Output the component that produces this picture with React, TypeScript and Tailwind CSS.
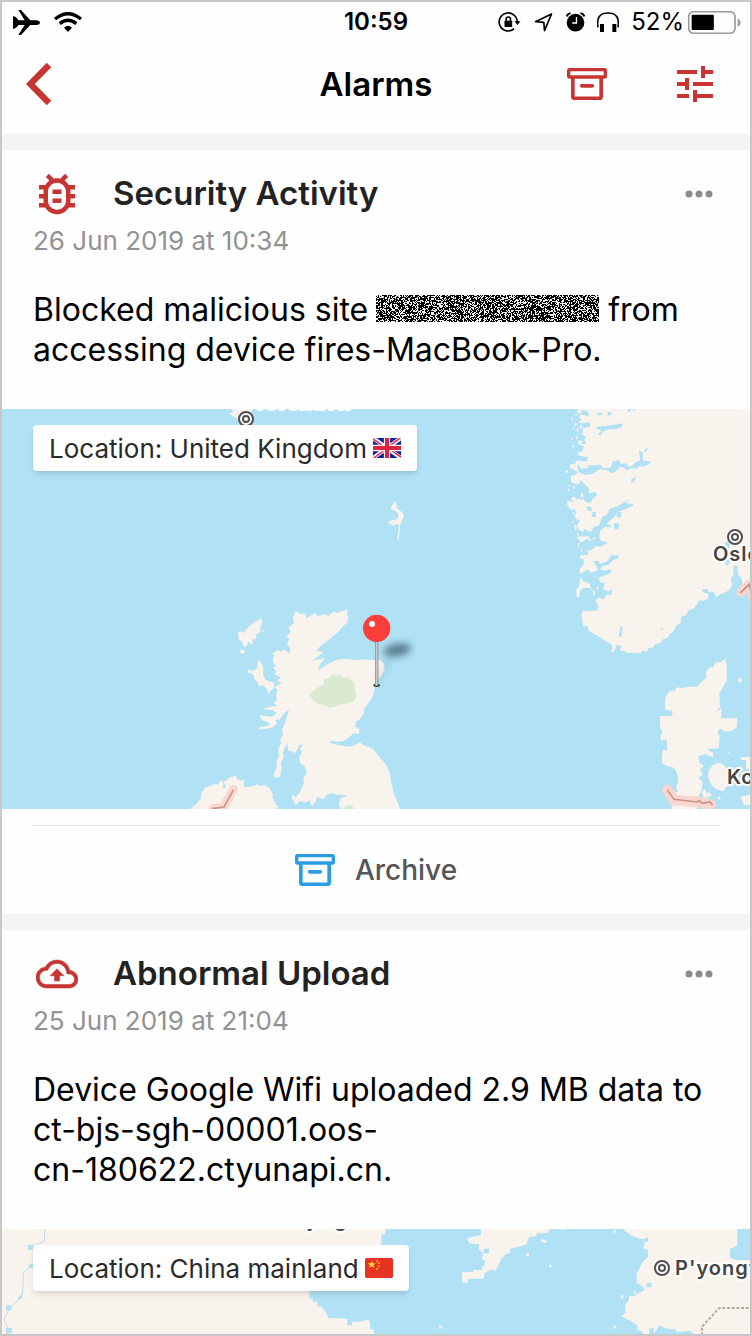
import React from "react";
import type { ReactNode } from "react";

function ArchiveIcon({ className }: { className: string }) {
  return (
    <svg viewBox="0 0 120 96" className={className} fill="none" stroke="currentColor" aria-hidden="true">
      <rect x="5" y="5" width="110" height="22" rx="3" strokeWidth="10" />
      <path d="M17.500 28V86q0 5 5 5h75q5 0 5-5V28" strokeWidth="11" />
      <path d="M44 53.500h32" strokeWidth="11" strokeLinecap="round" />
    </svg>
  );
}

function BugIcon() {
  return (
    <svg viewBox="0 0 24 24" className="size-[54px]" fill="currentColor" aria-hidden="true">
      <path d="M20 8h-2.810c-.45-.78-1.070-1.450-1.820-1.960L17 4.410 15.590 3l-2.170 2.170C12.960 5.060 12.490 5 12 5s-.96.06-1.410.17L8.410 3 7 4.410l1.620 1.630C7.880 6.550 7.260 7.220 6.810 8H4v2h2.090c-.05.33-.09.66-.09 1v1H4v2h2v1c0 .34.04.67.09 1H4v2h2.810c1.040 1.790 2.970 3 5.190 3s4.150-1.210 5.190-3H20v-2h-2.090c.05-.33.09-.66.09-1v-1h2v-2h-2v-1c0-.34-.04-.67-.09-1H20V8zm-4 4v3c0 2.210-1.790 4-4 4s-4-1.790-4-4v-4c0-2.210 1.790-4 4-4s4 1.790 4 4v1zm-6 2h4v2h-4v-2zm0-4h4v2h-4v-2z" />
    </svg>
  );
}

function CloudIcon() {
  return (
    <svg viewBox="0 0 24 24" className="size-[42px]" fill="currentColor" stroke="currentColor" strokeWidth=".3" aria-hidden="true">
      <path d="M19.350 10.040C18.670 6.590 15.640 4 12 4 9.110 4 6.600 5.640 5.350 8.040 2.340 8.360 0 10.910 0 14c0 3.310 2.690 6 6 6h13c2.760 0 5-2.240 5-5 0-2.640-2.050-4.780-4.650-4.960zM19 18H6c-2.210 0-4-1.790-4-4 0-2.050 1.530-3.760 3.560-3.970l1.070-.11.5-.95A5.469 5.469 0 0 1 12 6c2.620 0 4.880 1.860 5.390 4.430l.3 1.500 1.530.11A2.980 2.980 0 0 1 22 15c0 1.650-1.350 3-3 3zM8 13h2.550v3h2.900v-3H16l-4-4z" />
    </svg>
  );
}

function UkFlag() {
  return (
    <svg viewBox="0 0 84 60" className="h-5 w-7" aria-hidden="true">
      <clipPath id="uk-flag">
        <rect width="84" height="60" rx="5" />
      </clipPath>
      <g clipPath="url(#uk-flag)">
        <rect width="84" height="60" fill="#0a1f9c" />
        <path d="M0 0L84 60M84 0L0 60" stroke="#f4f4f8" strokeWidth="12" />
        <path d="M-2 1L40 31M86 59L44 29M84 -2L44 28M0 62L40 32" stroke="#dc2440" strokeWidth="4" />
        <path d="M42 0V60M0 30H84" stroke="#f4f4f8" strokeWidth="19" />
        <path d="M42 0V60M0 30H84" stroke="#dc2440" strokeWidth="12" />
      </g>
    </svg>
  );
}

function ChinaFlag() {
  return (
    <svg viewBox="0 0 84 60" className="h-5 w-7" aria-hidden="true">
      <rect width="84" height="60" rx="5" fill="#e63323" />
      <path d="M20 8l3 8 9 0-7 6 3 8-8-5-8 5 3-8-7-6 9 0z" fill="#fbdc3a" />
      <path d="M36 6l3 3-4 2zM41 13l3 3-4 2zM41 23l3 3-4 2zM35 30l4 3-4 2z" fill="#fbdc3a" stroke="#fbdc3a" />
    </svg>
  );
}

function buildNoise(width: number, height: number): string {
  let seed = 20190626;
  let d = "";
  for (let y = 0; y < height; y++) {
    for (let x = 0; x < width; x++) {
      seed = (Math.imul(seed, 1664525) + 1013904223) >>> 0;
      if (seed >>> 16 < 25000) d += `M${x} ${y}h1v1h-1z`;
    }
  }
  return d;
}

const NOISE = buildNoise(223, 27);

function Redacted() {
  return (
    <svg
      viewBox="0 0 223 27"
      className="ml-2 inline-block h-[27px] w-[223px] bg-black align-[-1px]"
      shapeRendering="crispEdges"
      aria-hidden="true"
    >
      <path d={NOISE} fill="#f0f0f0" />
    </svg>
  );
}

function CityMarker({ x, y }: { x: number; y: number }) {
  return (
    <g fill="none" stroke="#505050">
      <circle cx={x} cy={y} r="7" fill="#fff" strokeWidth="2" />
      <circle cx={x} cy={y} r="3" strokeWidth="2" />
    </g>
  );
}

function CityName({ x, y, children }: { x: number; y: number; children: string }) {
  return (
    <text
      x={x}
      y={y}
      fill="#444"
      stroke="#fff"
      strokeWidth="4"
      strokeLinejoin="round"
      paintOrder="stroke"
      className="font-[Inter,sans-serif] text-[20px] font-semibold tracking-wider"
    >
      {children}
    </text>
  );
}

function NorthSeaMap() {
  return (
    <svg
      viewBox="2 409 748 400"
      preserveAspectRatio="xMidYMin slice"
      className="block h-[400px] w-full bg-[#b0e1f5]"
      role="img"
      aria-label="Map"
    >
      <defs>
        <linearGradient id="needle" x1="0" x2="1" y1="0" y2="0">
          <stop offset="0" stopColor="#888" />
          <stop offset=".5" stopColor="#d4d4d4" />
          <stop offset="1" stopColor="#808080" />
        </linearGradient>
        <filter id="soft" x="-50%" y="-50%" width="200%" height="200%">
          <feGaussianBlur stdDeviation="11" />
        </filter>
      </defs>

      <g transform="translate(0 400) scale(.33333)" fill="#f8f3ec">
        <path d="M695 27h65l-8 10-20 2-6 12-14 6-14-8-10-10 12-2z" />
        <path d="M1186 302l4 14 3 10 10 8 9 12-5 14-6 14-2 18-2 26-5 2 2-22 3-24-10-2-6 6-14-8-4-4 14-6 14-2 4-10-2-10-8-6-12-6 0-6z" />
      </g>

      <g transform="translate(550 400) scale(.33333)">
        <path
          fill="#f8f3ec"
          d="M83 27v12l10 2-6 12 9 6-12 6 14 8-12 8 14 6-4 16 12 8-8 12-14-2-2 10 18 8-4 14-18 6 10 10 24 2-4 14-28-4-8 10-12 2-4 10 16 8 10 6-8 8-14 2 2 20 14 6 24-2-2 12 10 12-14 10 6 14-18-2-12 8-20-2 0 14 14 14 8-4 4 12-4 16 16 6-8 14 4 14 14 8-6 12-12 2 8 14 14 4-2 12-10 4 4 16-8 12 14 6-2 16-10 10-2 14 8 6-6 16-4 20-8 8 2 22h8l2-18 10-8 18-2 12 10-2 12 16 6-8 12 10 14-4 14-22 2-22 0-4 10 6 36h14l2 14 18 10 18 10 14 10 12 6 10 8-4 18 8 2 8-22 14 2-4 14 10 2 14 6h38l8-8 10 4 6-10 14-4 6-10 16-2 8-12 14-4 4-10 12-8 8-16 14-10 2-18 14-6 8-14 16-6 10-14 6-10 14 2 12-8 2-14-18-4-2-10 16 0 6 10 12-2 8 16 10-6 20-10 12-6 6-16-4-18 8-6v-30l12-2 2 28 10 8 4 20 12 8 2 12 12 2 4 18 16 10 2 16 10 18V27z"
        />
        <g fill="#b0e1f5">
          <path d="M83 190l10 16 20-2 4-8 34-2 8 10 22 0 8-20 18-4 6 12 16-2 6 10 12-2 10-12 14-4-4-30 14 6 4-10 8-4-4 10-12 4 2 24 24 2-6 8-16 8-14-2-6 8-18-2-12 8-10-10-12-2-8 10-12 10-20-10-20-2-22 14-24 2-18-8z" />
          <path d="M94 30l14 2 10 10-4 6-20-4zM140 38h16v8h-12zM172 36h12v10h-12zM232 24l4 14 10-12 10 12-4-14zM96 68h24v12l-24 4zM140 80l26-2 28-4 24-4-2 10-18 8-24 0-14 6-8 12-8-2 10-12-16-6zM96 122h12v10H96zM244 236l14-4-6 14-8 4z" />
          <path d="M90 240l16 14 12 12-2 14 20-4 6 10-12 8-10 16-16-6-8-24-12-6zM110 318l14 4 2 12-14-2zM128 335h10v16h-14z" />
          <path d="M250 312l-26-2 16-14-18 10-18 12-26 10-8 16-14 6-8 26-16 4-10 16-20-10-6 24 18-2 8 12 12-8 14 4 2-24 16-12 8-14 18-14 10-16 24-8 24-12z" />
          <path d="M200 336h14v16h-14zM168 374h14v8h-14zM192 370h14v18h-14zM94 430l16-14 10 6 24-10 10 10 20 6-24 12-14-2-8 10-26 8-8-10zM96 452l20 4-4 10-16 0z" />
          <path d="M92 522l20-14 12 10 20-8-8-18-8-8 18-2 4 10 22-8 12-18 22 0-2 8-14 6-14 14-22 6 6 12 20-4 6 8-18 10-22 6 4 14 14 4-6 18 20 6 10-8-4 18-16 0-6 14-14-4-16-2 4-16-14-12-4-14-20-6z" />
          <path d="M206 708l6-30 6 4-4 30zM328 694l10-14-2 18z" />
        </g>
        <path
          d="M65 54h4v6h-4zM76 42h5v6h-5zM68 84h5v4h-5zM74 70h6v8h-6zM65 114h4v6h-4zM66 136h5v6h-5zM44 214l10-4 0 6-8 4zM56 256h6v4h-6zM70 258h4v8h-4zM54 266h4v6h-4zM65 292h14v10H65zM68 337h5v6h-5zM75 343h5v6h-5zM66 364h5v4h-5zM74 374h6v16h-6zM82 400h4v18h-4zM84 428h4v12h-4zM80 84h5v10h-5zM78 110h5v8h-5zM92 280h8v12h-8zM98 310h8v6h-8zM152 504h6v5h-6zM140 560h5v8h-5z"
          fill="#f8f3ec"
        />
        <path d="M525 430l8-8 8 14-6 14-8-4zM522 482l14-6 4 14-10 8z" fill="#b0e1f5" />
        <path d="M573 577l24-24 12 42" fill="none" stroke="#f9d6cf" strokeWidth="28" strokeLinejoin="round" strokeLinecap="round" />
        <path d="M571 579l26-26 12 42" fill="none" stroke="#c98982" strokeWidth="5" />
      </g>

      <g transform="translate(190 590) scale(.33333)" fill="#f8f3ec">
        <path d="M317 62L330 72 345 70 350 85 365 75 375 68 385 78 405 72 415 78 430 65 442 68 460 62 475 58 470 72 475 82 472 98 460 108 445 125 430 138 415 150 400 162 388 172 378 182 402 186 394 192 366 212 384 208 405 205 390 222 385 240 400 230 420 218 440 210 460 206 480 208 500 210 520 208 550 210 570 210 582 222 584 240 575 255 562 275 555 290 552 305 545 325 535 340 522 358 522 370 510 388 498 396 495 410 508 418 506 432 490 430 478 442 462 452 445 455 425 453 418 458 440 464 465 468 480 470 495 464 510 456 520 466 535 470 550 478 560 490 568 502 580 514 590 528 598 545 602 565 605 585 610 605 618 625 632 660H452L446 640 452 625 475 616 440 614 425 610 408 615 402 628 382 622 375 638 365 648 358 630 345 638 330 632 318 645 305 625 308 612 318 622 330 605 335 595 342 580 340 565 350 550 345 530 330 518 328 500 335 488 330 475 340 465 330 463 322 478 315 492 305 482 294 482 292 460 285 470 278 490 282 500 272 520 275 535 270 560 255 563 250 558 260 530 260 510 268 495 264 480 274 455 270 450 280 430 275 420 285 400 290 380 298 358 282 370 270 388 255 390 262 400 248 412 225 418 205 418 210 410 232 408 240 400 215 390 208 375 225 378 245 380 262 370 250 362 218 356 240 350 262 348 250 338 262 330 258 318 262 300 255 290 275 280 262 272 272 262 252 252 260 245 248 232 258 228 248 215 252 195 248 190 264 180 275 185 280 178 300 190 300 175 290 160 298 148 288 140 302 125 295 112 312 100 308 85z" />
        <path d="M213 84l4 14-6 14 0 14-12 6-2 16-8 0-2 16-12-8-6 14-10 0-2-14-10-6-4-22 12-4 4 6 12-14 8-8 10-8 12-8zM148 184l10-6 8 6-6 8-8-2zM214 124l6-4 0 6z" />
        <path d="M207 210l8 10 6 16-2 16 6 16 12 6 16 4 0 16-12 8-6 10-4-14-10-12-14 2-6-12-8-10-4-14-14-4-2-8 18 2 12-10-2-12z" />
        <path d="M0 656l12-8 10-10 10-12 2-16 12-18 16-4 10-6 12 2 8-14 8 8-2 14 10 4-2-12-6-8 12-6 10-10 16-2 4 10 14 4 10-2-6 8 2 12 16 0 14-2 10-6 8 6 14-2 10 4 6 6 8 16 0 12 6 10 4 10 8 4-10 14v6z" />
        <path d="M356 316L372 302 385 290 400 284 402 268 415 266 428 252 440 258 448 252 455 262 478 264 486 274 495 282 494 298 500 318 492 334 470 340 450 344 422 354 402 346 380 340 366 326zM454 657l16-11h16l6 11z" fill="#d9ead0" />
        <path d="M68 656l34-6 28-52" fill="none" stroke="#f9d6cf" strokeWidth="26" strokeLinecap="round" strokeLinejoin="round" />
        <path d="M66 656l36-5 28-51" fill="none" stroke="#d0948e" strokeWidth="5" />
        <ellipse cx="622" cy="180" rx="42" ry="20" fill="#355061" opacity=".65" filter="url(#soft)" transform="rotate(-10 622 180)" />
        <path d="M562 285l40-84" stroke="#55707c" strokeWidth="7" opacity=".3" filter="url(#soft)" />
        <ellipse cx="560" cy="286" rx="10" ry="5" fill="#333" />
        <rect x="555" y="154" width="10" height="133" fill="url(#needle)" />
        <circle cx="560" cy="115" r="41" fill="#fb3e39" />
        <circle cx="546" cy="102" r="9" fill="#fff" />
      </g>

      <g transform="translate(630 630) scale(.33333)" fill="#f8f3ec">
        <path d="M0 0h106l-6 8-10-2-6 8-20 6-6 8-16-4-20 4-10-6-12-6z" />
        <path d="M296 76L285 90 290 100 290 150 278 175 268 190 270 232 260 245 275 235 273 265 322 265 320 292 305 303 285 305 270 295 262 308 270 320 266 355 230 356 250 370 248 382 225 372 205 378 208 398 222 408 210 418 218 432 205 445 218 455 214 485 205 500 200 540H122L128 525 118 515 125 490 145 485 138 470 145 455 140 425 128 412 110 408 95 398 98 360 112 360 110 328 92 332 92 315 98 310 90 290 90 258 127 258 127 242 106 240 104 215 110 195 120 182 135 182 138 172 160 175 170 170 200 170 215 155 230 140 228 125 240 112 250 112 255 98 275 95z" />
        <path d="M236 424l12-20 18-6 16 8 8 12 12 6 6 20-4 18-16 8-8 14-22-6-14-14-10-22zM332 382l34-2v40l-18-4 0-26-14 0zM332 500l34-6v30l-24 2zM324 150l8-8 6 12-10 4zM216 486l8-10 6 14 8-4 8 12-12 2-10 12zM260 504l10-6 2 14zM290 370l8-8 0 8z" />
        <path d="M112 480l20 30 76 6 34 8" fill="none" stroke="#f9d6cf" strokeWidth="32" strokeLinecap="round" strokeLinejoin="round" />
        <path d="M112 480l20 28 70 8 6-4 8 8 24-4 8 10" fill="none" stroke="#cf918b" strokeWidth="5" />
      </g>

      <CityMarker x={246} y={419} />
      <CityMarker x={735} y={537} />
      <CityName x={253} y={409}>Tórshavn</CityName>
      <CityName x={713} y={561}>Oslo</CityName>
      <CityName x={727} y={784}>Kobenhavn</CityName>
    </svg>
  );
}

function YellowSeaMap() {
  return (
    <svg
      viewBox="2 1229 748 400"
      preserveAspectRatio="xMidYMin slice"
      className="block h-[400px] w-full bg-[#b0e1f5]"
      role="img"
      aria-label="Map"
    >
      <g transform="translate(0 1210) scale(.33333)">
        <path fill="#f8f3ec" d="M0 57H1156V73H1144V133L1120 180 1000 215 928 240V266H938V276H952V290H964L976 304 986 324 1042 326V346H1056V336L1090 334 1104 328 1110 336V358H1122V1300H0z" />
        <g fill="#b0e1f5">
          <path d="M84 104h18v16H84zM86 164l14-4v14H86zM52 266l14-14v14zM18 286h16v14H18zM18 354h18v16H18z" />
        </g>
        <path d="M134 57v36l-34 14v56l-30 24-2 68-8 10-30 28-18 34 14 36-8 20" fill="none" stroke="#c3dce4" strokeWidth="3" />
      </g>
      <g transform="translate(400 1210) scale(.33333)">
        <g fill="#f8f3ec">
          <path d="M243 57V75L201 85 209 101 237 103V117L249 131 245 148 255 152V164L247 170V180H221L219 186H189L186 190V218H204V206H252V190L276 178 285 185 293 170 304 146 318 132 330 128V116L378 104 388 80 410 78V70H440L450 58V57z" />
          <path d="M668 57L692 75 720 87 734 87 744 80V95H734L730 115 744 120V140L728 156 710 190V218L726 228 734 240 706 254V258H688L686 272 676 282V308L664 318 690 332 712 346V362H726L730 374 748 374V355L762 355V372L778 346 800 356 826 358 832 366 870 362 884 376 900 1300H1100V150H1010L990 143V118L1012 106V57z" />
          <path d="M422 88l20 4-6 8-14-6zM378 130h9v8h-9zM447 164h8v8h-8zM663 256h8v8h-8zM117 347h8v8h-8zM641 347h8v8h-8zM640 60h8v8h-8zM698 236l12 14-6 2zM484 57h10v3h-10z" />
        </g>
        <path d="M251 116h16v14h-16zM740 218h15v14h-15z" fill="#b0e1f5" />
        <path d="M1060 294H958l-52 56v40" fill="none" stroke="#b7aba0" strokeWidth="6" strokeDasharray="9 5" />
      </g>
      <CityName x={275} y={1227}>Beijing</CityName>
      <CityMarker x={662} y={1268} />
      <CityName x={675} y={1275}>{"P'yongyang"}</CityName>
    </svg>
  );
}

function StatusBar() {
  return (
    <div className="grid h-10 grid-cols-[1fr_auto_1fr] items-center px-[9px]">
      <div className="flex items-center gap-[14px] pl-[2px]">
        <svg viewBox="0 0 81 75" className="h-[25px] w-[27px]" aria-hidden="true">
          <path d="M0 18l8 3 9 10 18 0-19-31h8l28 31h20q9 2 9 7t-9 7H52L24 75h-8l19-30H17L8 54l-8 3z" />
        </svg>
        <svg viewBox="0 0 84 60" className="h-5 w-7" fill="none" stroke="#000" strokeWidth="10" aria-hidden="true">
          <path d="M3 21Q42-11 81 21" />
          <path d="M17 35Q42 15 67 35" />
          <path d="M30 47Q42 36 54 47L42 60z" fill="#000" stroke="none" />
        </svg>
      </div>
      <span className="text-2xl font-semibold">10:59</span>
      <div className="flex items-center justify-end">
        <svg viewBox="0 0 68 60" className="h-5 w-[23px]" fill="none" stroke="#000" strokeWidth="5" aria-hidden="true">
          <path d="M57 30A27 27 0 1 0 48 50" />
          <path d="M49 28h18L58 39z" fill="#000" stroke="none" />
          <rect x="19" y="26" width="23" height="19" rx="2" fill="#000" stroke="none" />
          <path d="M24 28v-7q0-6 6.500-6t6.500 6v7" />
        </svg>
        <svg viewBox="0 0 56 60" className="ml-[13px] h-5 w-[19px]" fill="none" stroke="#000" strokeWidth="5" strokeLinejoin="round" aria-hidden="true">
          <path d="M52 6L4 29l25 2 2 25z" />
        </svg>
        <svg viewBox="0 0 58 60" className="ml-[13px] h-5 w-[19px]" aria-hidden="true">
          <circle cx="29" cy="32" r="27" />
          <path d="M2 13Q4 4 14 3M56 13Q54 4 44 3" fill="none" stroke="#000" strokeWidth="6" />
          <path d="M32 15v18H19" fill="none" stroke="#fff" strokeWidth="4" />
        </svg>
        <svg viewBox="0 0 66 60" className="ml-3 h-5 w-[22px]" fill="none" stroke="#000" strokeWidth="5" aria-hidden="true">
          <path d="M3 46Q-4 3 33 3T63 46" />
          <path d="M15 36v24M52 36v24" strokeWidth="12" />
        </svg>
        <span className="ml-3 text-2xl">52%</span>
        <svg viewBox="0 0 160 69" className="ml-1 h-[23px] w-[53px]" aria-hidden="true">
          <rect x="2" y="2" width="140" height="65" rx="15" fill="none" stroke="#9a9a9a" strokeWidth="5" />
          <rect x="11" y="11" width="67" height="46" rx="3" />
          <path d="M150 22q9 5 9 13t-9 13z" fill="#9a9a9a" />
        </svg>
      </div>
    </div>
  );
}

interface AlarmCardProps {
  icon: ReactNode;
  title: string;
  date: string;
  message: ReactNode;
  location: string;
  flag: ReactNode;
  map: ReactNode;
}

function AlarmCard({ icon, title, date, message, location, flag, map }: AlarmCardProps) {
  return (
    <article className="bg-[#fefefe]">
      <div className="px-[31px] pt-5 pb-[39px]">
        <div className="flex h-12 items-center">
          <span className="-ml-1 flex w-14 shrink-0 justify-center text-[#c63531]">{icon}</span>
          <h2 className="ml-7 flex-1 text-[33px] font-semibold text-[#222]">{title}</h2>
          <button type="button" aria-label="More options" className="mr-[6px] text-[#8c8c8c]">
            <svg viewBox="0 0 28 8" className="h-2 w-7" fill="currentColor" aria-hidden="true">
              <circle cx="4" cy="4" r="3.500" />
              <circle cx="14" cy="4" r="3.500" />
              <circle cx="24" cy="4" r="3.500" />
            </svg>
          </button>
        </div>
        <p className="text-[26px] leading-[46px] text-[#929292]">{date}</p>
        <p className="pt-[26px] text-[32px] leading-10 text-black">{message}</p>
      </div>
      <div className="relative">
        {map}
        <div className="absolute top-4 left-[31px] flex h-[46px] items-center gap-[6px] rounded bg-white px-4 text-[26px] text-[#2a2a2a] shadow-md">
          {location}
          {flag}
        </div>
      </div>
      <div className="px-[31px] pt-4">
        <button
          type="button"
          className="flex h-[89px] w-full items-center justify-center gap-5 border-t border-[#e6eaea] text-[28px] font-medium text-[#555]"
        >
          <ArchiveIcon className="h-8 w-10 text-[#2b9ce5]" />
          Archive
        </button>
      </div>
    </article>
  );
}

export default function App() {
  return (
    <div className="flex h-screen flex-col overflow-hidden border-2 border-[#c8c8c8] bg-[#f4f4f4] font-[Inter,sans-serif] text-black">
      <header className="shrink-0 bg-[#fefefe] pb-2">
        <StatusBar />
        <nav className="grid h-[84px] grid-cols-[1fr_auto_1fr] items-center px-6">
          <button type="button" aria-label="Back" className="justify-self-start text-[#c63531]">
            <svg viewBox="0 0 75 126" className="h-[42px] w-[25px]" fill="none" stroke="currentColor" strokeWidth="19" aria-hidden="true">
              <path d="M69 6L13 63l56 57" />
            </svg>
          </button>
          <h1 className="pt-[2px] text-[33px] font-semibold">Alarms</h1>
          <div className="flex items-center justify-end gap-16 pr-[7px] text-[#c63531]">
            <button type="button" aria-label="Archive">
              <ArchiveIcon className="h-8 w-10" />
            </button>
            <button type="button" aria-label="Filter">
              <svg viewBox="0 0 24 24" className="size-12" fill="currentColor" aria-hidden="true">
                <path d="M3 17v2h6v-2H3zM3 5v2h10V5H3zm10 16v-2h8v-2h-8v-2h-2v6h2zM7 9v2H3v2h4v2h2V9H7zm14 4v-2H11v2h10zm-6-4h2V7h4V5h-4V3h-2v6z" />
              </svg>
            </button>
          </div>
        </nav>
      </header>
      <main className="min-h-0 flex-1 space-y-4 overflow-hidden pt-4">
        <AlarmCard
          icon={<BugIcon />}
          title="Security Activity"
          date="26 Jun 2019 at 10:34"
          message={
            <>
              Blocked malicious site
              <Redacted /> from
              <br />
              accessing device fires-MacBook-Pro.
            </>
          }
          location="Location: United Kingdom"
          flag={<UkFlag />}
          map={<NorthSeaMap />}
        />
        <AlarmCard
          icon={<CloudIcon />}
          title="Abnormal Upload"
          date="25 Jun 2019 at 21:04"
          message={
            <>
              Device Google Wifi uploaded 2.9 MB data to
              <br />
              ct-bjs-sgh-00001.oos-
              <br />
              cn-180622.ctyunapi.cn.
            </>
          }
          location="Location: China mainland"
          flag={<ChinaFlag />}
          map={<YellowSeaMap />}
        />
      </main>
    </div>
  );
}
